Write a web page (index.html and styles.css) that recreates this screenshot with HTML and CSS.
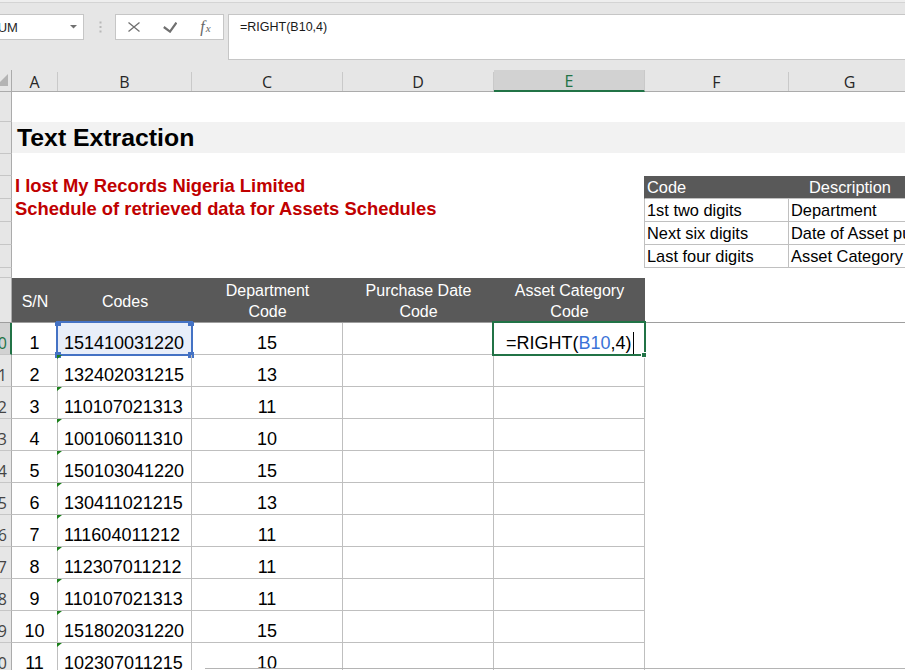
FILE: index.html
```html
<!DOCTYPE html>
<html lang="en">
<head>
<meta charset="utf-8">
<title>Text Extraction</title>
<link rel="stylesheet" href="styles.css">
</head>
<body>
<div class="topedge"></div>
<div class="fbar">
  <div class="namebox"><span>SUM</span><svg class="nb-arrow" width="7" height="4" viewBox="0 0 7 4"><path d="M0 0H7L3.5 3.5Z" fill="#707070"/></svg></div>
  <svg class="grip" width="3" height="12" viewBox="0 0 3 12"><rect x="0.5" y="0.5" width="2" height="2" fill="#b8b8b8"/><rect x="0.5" y="5" width="2" height="2" fill="#b8b8b8"/><rect x="0.5" y="9.5" width="2" height="2" fill="#b8b8b8"/></svg>
  <div class="fbtns">
    <span class="fbtn"><svg width="12" height="10" viewBox="0 0 12 10"><path d="M0.5 0.5L11.5 9.5M11.5 0.5L0.5 9.5" stroke="#707070" stroke-width="1.3" fill="none"/></svg></span>
    <span class="fbtn"><svg width="14" height="11" viewBox="0 0 14 11"><path d="M0.8 5L7 9.6L13.4 0.6" stroke="#707070" stroke-width="2.2" fill="none"/></svg></span>
    <span class="fbtn fx">f<span class="fx-x">x</span></span>
  </div>
  <div class="formula">=RIGHT(B10,4)</div>
</div>

<div class="sheet">
  <div class="row colhead">
    <div class="rh corner"><svg width="11" height="21" viewBox="0 0 11 21"><path d="M8 4V16H-4Z" fill="#b4b4b4"/></svg></div>
    <div class="ch wa">A</div>
    <div class="ch wb">B</div>
    <div class="ch wc">C</div>
    <div class="ch wd">D</div>
    <div class="ch we sel">E</div>
    <div class="ch wf">F</div>
    <div class="ch wg">G</div>
  </div>

  <div class="row h30"><div class="rh"></div></div>
  <div class="row h32"><div class="rh"></div><div class="title">Text Extraction</div></div>
  <div class="row h22"><div class="rh"></div></div>
  <div class="row h23">
    <div class="rh"></div>
    <div class="red">I lost My Records Nigeria Limited</div>
    <div class="th thf">Code</div>
    <div class="th thg">Description</div>
  </div>
  <div class="row h23">
    <div class="rh"></div>
    <div class="red">Schedule of retrieved data for Assets Schedules</div>
    <div class="td tdf">1st two digits</div>
    <div class="td tdg">Department</div>
  </div>
  <div class="row h23">
    <div class="rh"></div>
    <div class="red"></div>
    <div class="td tdf">Next six digits</div>
    <div class="td tdg">Date of Asset purchase</div>
  </div>
  <div class="row h23">
    <div class="rh"></div>
    <div class="red"></div>
    <div class="td tdf">Last four digits</div>
    <div class="td tdg">Asset Category</div>
  </div>
  <div class="row h10"><div class="rh"></div></div>
  <div class="row h45 hdr">
    <div class="rh"></div>
    <div class="mh wa">S/N</div>
    <div class="mh wb">Codes</div>
    <div class="mh wc">Department<br>Code</div>
    <div class="mh wd">Purchase Date<br>Code</div>
    <div class="mh we">Asset Category<br>Code</div>
  </div>

  <div class="row h32">
    <div class="rh rsel">10</div>
    <div class="d wa ctr">1</div>
    <div class="d wb code active-range">151410031220<div class="rng"><i class="hd tl"></i><i class="hd tr"></i><i class="hd bl"></i><i class="hd br"></i></div></div>
    <div class="d wc ctr">15</div>
    <div class="d wd"></div>
    <div class="d we edit"><span>=RIGHT(<span class="ref">B10</span>,4)</span><span class="caret"></span><div class="act"><i class="fill"></i></div></div>
  </div>
  <div class="row h32"><div class="rh">11</div><div class="d wa ctr">2</div><div class="d wb code tri">132402031215</div><div class="d wc ctr">13</div><div class="d wd"></div><div class="d we"></div></div>
  <div class="row h32"><div class="rh">12</div><div class="d wa ctr">3</div><div class="d wb code tri">110107021313</div><div class="d wc ctr">11</div><div class="d wd"></div><div class="d we"></div></div>
  <div class="row h32"><div class="rh">13</div><div class="d wa ctr">4</div><div class="d wb code tri">100106011310</div><div class="d wc ctr">10</div><div class="d wd"></div><div class="d we"></div></div>
  <div class="row h32"><div class="rh">14</div><div class="d wa ctr">5</div><div class="d wb code tri">150103041220</div><div class="d wc ctr">15</div><div class="d wd"></div><div class="d we"></div></div>
  <div class="row h32"><div class="rh">15</div><div class="d wa ctr">6</div><div class="d wb code tri">130411021215</div><div class="d wc ctr">13</div><div class="d wd"></div><div class="d we"></div></div>
  <div class="row h32"><div class="rh">16</div><div class="d wa ctr">7</div><div class="d wb code tri">111604011212</div><div class="d wc ctr">11</div><div class="d wd"></div><div class="d we"></div></div>
  <div class="row h32"><div class="rh">17</div><div class="d wa ctr">8</div><div class="d wb code tri">112307011212</div><div class="d wc ctr">11</div><div class="d wd"></div><div class="d we"></div></div>
  <div class="row h32"><div class="rh">18</div><div class="d wa ctr">9</div><div class="d wb code tri">110107021313</div><div class="d wc ctr">11</div><div class="d wd"></div><div class="d we"></div></div>
  <div class="row h32"><div class="rh">19</div><div class="d wa ctr">10</div><div class="d wb code tri">151802031220</div><div class="d wc ctr">15</div><div class="d wd"></div><div class="d we"></div></div>
  <div class="row h32"><div class="rh">20</div><div class="d wa ctr">11</div><div class="d wb code tri">102307011215</div><div class="d wc ctr">10</div><div class="d wd"></div><div class="d we"></div></div>
</div>
<div class="hline"></div>
</body>
</html>
```

FILE: styles.css
```css
* { box-sizing: border-box; margin: 0; padding: 0; }
html, body { width: 905px; height: 670px; overflow: hidden; background: #fff; }
body { position: relative; font-family: "Liberation Sans", Arial, sans-serif; color: #000; }

/* formula bar */
.topedge { height: 3px; background: #eeeeee; border-bottom: 1px solid #d4d4d4; }
.fbar { height: 67px; background: #e6e6e6; padding-top: 11px; display: flex; align-items: flex-start; }
.namebox { flex: none; margin-left: -12px; width: 96px; height: 26px; background: #fff; border: 1px solid #c6c6c6;
  display: flex; align-items: center; justify-content: space-between; padding-right: 6px;
  font-size: 13px; color: #262626; }
.nb-arrow { margin-top: -1px; }
.grip { flex: none; margin: 7px 0 0 15px; }
.fbtns { flex: none; margin-left: 13px; width: 109px; height: 26px; background: #fff; border: 1px solid #c6c6c6;
  display: flex; align-items: center; }
.fbtn { width: 36px; height: 24px; display: flex; align-items: center; justify-content: center; }
.fbtn:last-child { width: 35px; }
.fx { font-family: "Liberation Serif", serif; font-style: italic; font-size: 16px; color: #666; align-items: baseline; padding-top: 3px; }
.fx-x { font-size: 11px; margin-left: 1px; vertical-align: -2px; }
.formula { flex: 1; margin: 0 -2px 0 4px; height: 46px; background: #fff; border: 1px solid #c6c6c6;
  padding: 5px 0 0 11px; font-size: 12.5px; line-height: 15px; color: #1a1a1a; }

/* sheet */
.sheet { width: 911px; }
.row { display: flex; }
.h10 { height: 10px; } .h22 { height: 22px; } .h23 { height: 23px; } .h30 { height: 30px; }
.h32 { height: 32px; } .h45 { height: 45px; }

.rh { flex: none; width: 12px; background: #e6e6e6; border-right: 1px solid #ababab; border-bottom: 1px solid #c6c6c6;
  display: flex; justify-content: flex-end; align-items: flex-end; padding: 0 4px 1px 0; overflow: hidden;
  white-space: nowrap; font-family: "Open Sans", sans-serif; font-size: 16px; line-height: 20px; color: #444; }
.rh.rsel { background: #d2d2d2; color: #217346; border-right: 2px solid #217346; padding-right: 3px; }

.colhead { height: 22px; border-bottom: 1px solid #ababab; background: #e6e6e6; align-items: flex-end; }
.rh.corner { height: 21px; border-bottom: none; padding: 0; justify-content: flex-start; align-items: stretch; }
.ch { flex: none; height: 19px; border-right: 1px solid #c9c9c9; display: flex; align-items: center; justify-content: center;
  font-family: "Open Sans", sans-serif; font-size: 16px; color: #262626; }
.ch.sel { height: 22px; margin-bottom: -1px; padding-top: 2px; background: #d2d2d2; color: #217346; border-bottom: 2px solid #217346; }

.wa { width: 46px; } .wb { width: 134px; } .wc { width: 151px; } .wd { width: 151px; } .we { width: 151px; }
.wf { width: 144px; } .wg { width: 122px; }

.title { flex: 1; height: 31px; align-self: flex-start; background: #f2f2f2; font-weight: bold; font-size: 24.8px;
  padding: 0 0 1px 5px; display: flex; align-items: flex-end; white-space: nowrap; }

.red { flex: none; width: 632px; color: #c00000; font-weight: bold; font-size: 18.4px; padding: 0 0 2px 3px;
  display: flex; align-items: flex-end; white-space: nowrap; }

.th, .td { flex: none; display: flex; align-items: flex-end; font-size: 16.4px; padding: 0 0 1px 2px; white-space: nowrap; overflow: hidden; }
.th { background: #595959; color: #fff; border-bottom: 1px solid #c0c0c0; }
.thf { width: 145px; border-left: 1px solid #595959; }
.thg { width: 122px; justify-content: center; padding-left: 0; }
.td { border-bottom: 1px solid #c0c0c0; border-right: 1px solid #c0c0c0; color: #000; }
.tdf { width: 145px; border-left: 1px solid #c0c0c0; }
.tdg { width: 122px; }

.hdr { border-bottom: 1px solid #9e9e9e; }
.hdr .rh { border-bottom: none; }
.mh { flex: none; background: #595959; color: #fff; font-size: 16px; line-height: 21px; text-align: center;
  display: flex; align-items: center; justify-content: center; padding-top: 2px; }

.d { flex: none; display: flex; align-items: flex-end; border-right: 1px solid #bfbfbf; border-bottom: 1px solid #bfbfbf;
  font-size: 18px; white-space: nowrap; }
.ctr { justify-content: center; }
.code { padding-left: 6px; position: relative; }
.tri::before { content: ""; position: absolute; left: -1px; top: 0; width: 0; height: 0;
  border-top: 4px solid #1a7f1a; border-right: 5px solid transparent; }

.active-range { background: #e8eef9; }
.rng { position: absolute; left: -2px; top: -2px; width: 137px; height: 35px; border: 2px solid #4472c4; }
.hd { position: absolute; width: 6px; height: 6px; background: #4472c4; }
.hd.tl { left: -3px; top: -1px; height: 4px; }
.hd.tr { left: 130px; top: -1px; height: 4px; }
.hd.bl { left: -3px; top: 29px; }
.hd.br { left: 130px; top: 29px; }

.edit { position: relative; padding-left: 12px; }
.ref { color: #3a73d8; }
.caret { width: 1px; height: 22px; background: #000; margin-left: 1px; }
.act { position: absolute; left: -2px; top: -2px; width: 154px; height: 35px; border: 2px solid #217346; }
.fill { position: absolute; left: 147px; top: 29px; width: 6px; height: 6px; background: #217346; border: 1px solid #fff; }

.hline { position: absolute; left: 205px; top: 668px; width: 700px; height: 1px; background: #b4b4b4; }
```
